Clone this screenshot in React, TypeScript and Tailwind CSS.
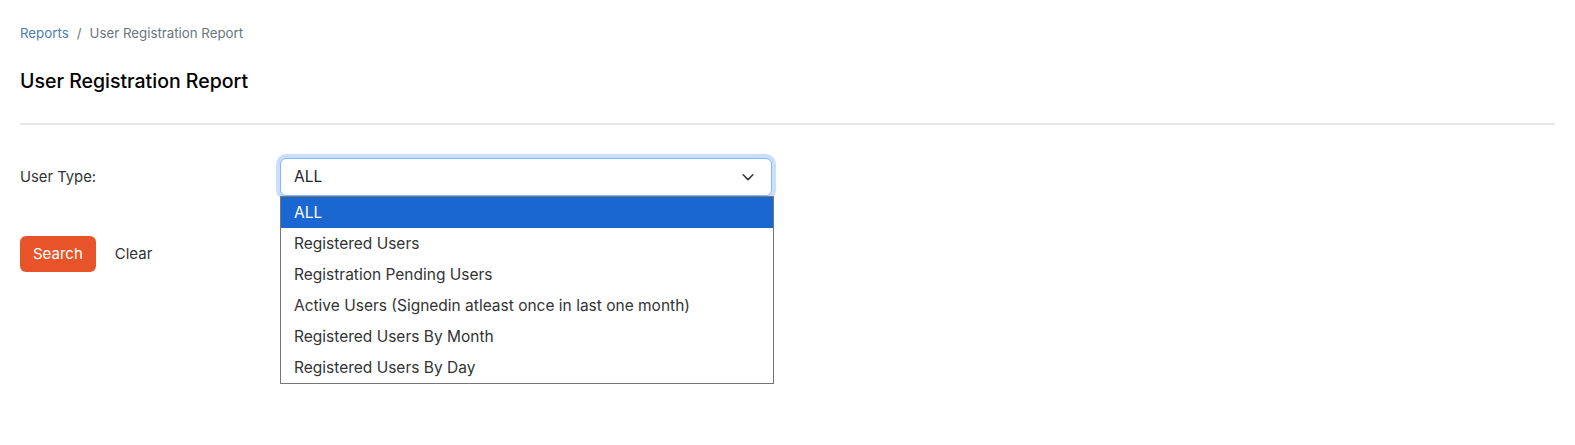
const options = [
  "ALL",
  "Registered Users",
  "Registration Pending Users",
  "Active Users (Signedin atleast once in last one month)",
  "Registered Users By Month",
  "Registered Users By Day",
];

const App = () => {
  return (
    <div className="min-h-[445px] bg-white px-5 pt-[24px] font-['Inter',sans-serif] text-[#212529]">
      {/* Breadcrumb */}
      <nav className="flex items-center text-[13.3px] leading-[18px]">
        <span className="text-[#4a7db0]">Reports</span>
        <span className="mx-2 text-[#6c757d]">/</span>
        <span className="text-[#6c757d]">User Registration Report</span>
      </nav>

      <h1 className="mt-[26px] text-[19.5px] leading-[26px] font-medium text-black">User Registration Report</h1>

      <hr className="mt-[29px] border-t-2 border-[#e6e6e6]" />

      {/* Filter row */}
      <div className="mt-[33px] flex items-start">
        <label className="w-[260px] pt-[9px] text-[14.8px] leading-5 text-[#333]">User Type:</label>
        <div className="relative w-[492px]">
          <div className="flex h-[38px] items-center justify-between rounded-[6px] border border-[#86b7fe] bg-white pl-[13px] pr-[16px] text-[15.5px] text-[#212529] shadow-[0_0_0_4px_rgba(13,110,253,0.22)]">
            <span>ALL</span>
            <svg width="14" height="14" viewBox="0 0 16 16" fill="none" stroke="#343a40" strokeWidth="1.8" strokeLinecap="round" strokeLinejoin="round">
              <path d="M2.5 5.5 8 11l5.5-5.5" />
            </svg>
          </div>
          <ul className="absolute left-0 top-[38px] z-10 w-[494px] border border-[#767676] bg-white text-[15.5px] text-[#333]">
            {options.map((o, i) => (
              <li
                key={o}
                className={`flex h-[31px] items-center pl-[13px] ${i === 0 ? "bg-[#1a67d2] text-white" : ""}`}
              >
                {o}
              </li>
            ))}
          </ul>
        </div>
      </div>

      <div className="mt-[40px] flex items-center gap-[19px]">
        <button className="h-[36px] rounded-[6px] bg-[#e8542a] px-[13px] text-[15px] text-white">Search</button>
        <button className="text-[15px] text-[#333]">Clear</button>
      </div>
    </div>
  );
};

export default App;
